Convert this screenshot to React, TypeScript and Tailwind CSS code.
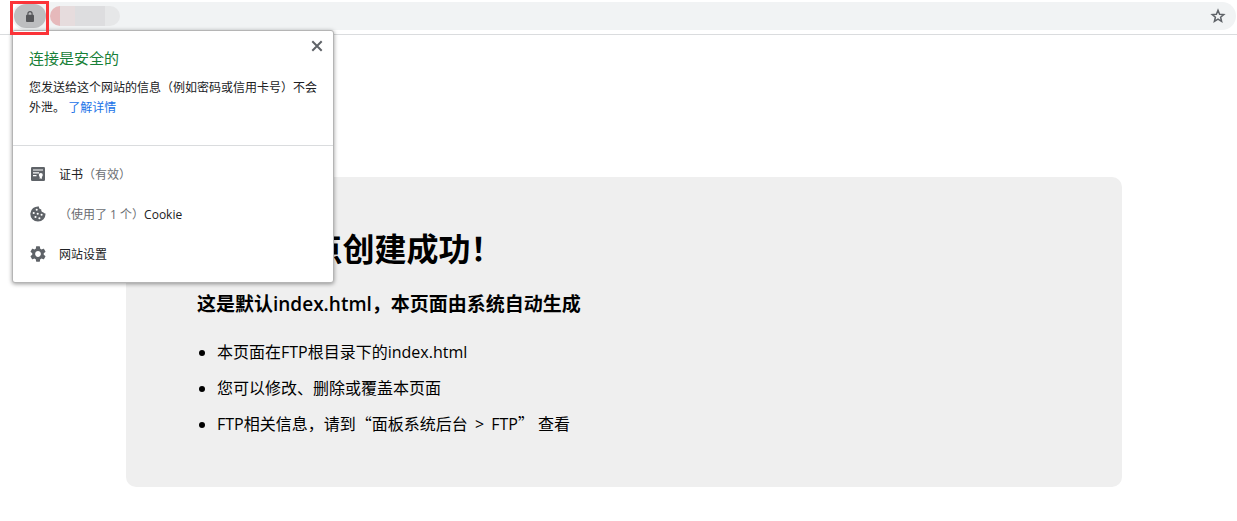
import { MdSettings } from "react-icons/md";

function LockIcon() {
  return (
    <svg viewBox="0 0 8 11" className="h-[11px] w-2" aria-hidden="true">
      <rect x="0" y="3.800" width="8" height="7.200" rx="0.900" fill="#555659" />
      <path d="M1.900 4.500V2.700a2.100 2.100 0 0 1 4.200 0v1.800" fill="none" stroke="#555659" strokeWidth="1.200" />
    </svg>
  );
}

function StarIcon() {
  return (
    <svg viewBox="0 0 16 16" className="size-4" fill="none" stroke="#5f6368" strokeWidth="1.500" aria-hidden="true">
      <path d="m8 2.300 1.600 3.900 4.200.35-3.200 2.750 1 4.100L8 11.200l-3.600 2.200 1-4.100-3.200-2.750 4.200-.35L8 2.300Z" />
    </svg>
  );
}

function CloseIcon() {
  return (
    <svg viewBox="0 0 16 16" className="size-4" fill="none" stroke="#5f6368" strokeWidth="2" aria-hidden="true">
      <path d="m3.300 3.300 9.400 9.400M12.700 3.300l-9.400 9.400" />
    </svg>
  );
}

function CertificateIcon() {
  return (
    <svg viewBox="0 0 16 16" className="size-4 shrink-0" aria-hidden="true">
      <rect x="1" y="1" width="14" height="14" rx="1.300" fill="#5f6368" />
      <path d="M3 4h10M3 6.800h6M3 9.600h3.500" stroke="#fff" strokeWidth="1.200" />
      <circle cx="10.800" cy="9" r="2" fill="#fff" />
      <path d="M9.700 10h2.200v3l-1.100-.7-1.100.7v-3Z" fill="#fff" />
    </svg>
  );
}

function CookieIcon() {
  return (
    <svg viewBox="0 0 16 16" className="size-4 shrink-0" aria-hidden="true">
      <path
        d="M9 .5a2.600 2.600 0 0 0 2.300 3.100 2.500 2.500 0 0 0 2.200 2.900c.6.700 1.300 1 2 .9A7.600 7.600 0 1 1 9 .5Z"
        fill="#5f6368"
      />
      <g fill="#fff">
        <circle cx="6.700" cy="3.800" r="1.050" />
        <circle cx="3.700" cy="7" r="1.050" />
        <circle cx="7.700" cy="7.700" r="1.050" />
        <circle cx="11.600" cy="8.700" r="1.050" />
        <circle cx="5.500" cy="11" r="1.050" />
        <circle cx="9.400" cy="12.200" r="1.050" />
      </g>
    </svg>
  );
}

function AddressBar() {
  return (
    <header className="flex h-[35px] items-start border-b border-[#dadcde] pt-[2px] pr-px pl-3">
      <div className="flex h-7 flex-1 items-center rounded-full bg-[#f1f3f4] pr-[10px] pl-[2px]">
        <button
          type="button"
          aria-label="查看网站信息"
          className="flex h-6 w-8 items-center justify-center rounded-full bg-[#bdbec0]"
        >
          <LockIcon />
        </button>
        <div className="ml-1 flex h-5 overflow-hidden rounded-full" aria-hidden="true">
          <span className="w-[10px] bg-[#e6b9bb]" />
          <span className="w-[15px] bg-[#e6dcdd]" />
          <span className="w-[30px] bg-[#dddddf]" />
          <span className="w-[15px] bg-[#e6e7e8]" />
        </div>
        <button type="button" aria-label="为此标签页添加书签" className="ml-auto">
          <StarIcon />
        </button>
      </div>
    </header>
  );
}

function SiteInfo() {
  return (
    <section
      aria-label="网站信息"
      className="absolute top-[30px] left-3 w-[322px] rounded-[3px] border border-[#b5b5b5] bg-white text-xs text-[#202124] shadow-[0_1px_4px_rgba(0,0,0,0.4)]"
    >
      <button type="button" aria-label="关闭" className="absolute top-[7px] right-2">
        <CloseIcon />
      </button>
      <div className="h-[115px] border-b border-[#dadcde] px-4 pt-[15px]">
        <h2 className="text-[15px] leading-6 text-[#188038]">连接是安全的</h2>
        <p className="mt-2 leading-5">
          您发送给这个网站的信息（例如密码或信用卡号）不会外泄。{" "}
          <a href="#details" className="inline-block text-[#1a73e8]">了解详情</a>
        </p>
      </div>
      <ul className="py-2">
        <li>
          <button type="button" className="flex h-10 w-full items-center gap-[13px] px-[17px]">
            <CertificateIcon />
            <span className="pt-px">
              证书<span className="text-[#6b6e73]">（有效）</span>
            </span>
          </button>
        </li>
        <li>
          <button type="button" className="flex h-10 w-full items-center gap-[13px] px-[17px]">
            <CookieIcon />
            <span className="pt-px">
              <span className="text-[#6b6e73]">（使用了 1 个）</span>Cookie
            </span>
          </button>
        </li>
        <li>
          <button type="button" className="flex h-10 w-full items-center gap-[13px] px-[17px]">
            <MdSettings viewBox="2 2 20 20" className="size-4 shrink-0 text-[#5f6368]" />
            <span className="pt-px">网站设置</span>
          </button>
        </li>
      </ul>
    </section>
  );
}

export default function App() {
  return (
    <div
      lang="zh-CN"
      className="relative min-h-screen bg-white font-['Open_Sans','Noto_Sans_CJK_SC',sans-serif] text-black"
    >
      <AddressBar />
      <main className="mt-[142px] mr-[115px] ml-[126px] rounded-[10px] bg-[#efefef] px-[71px] pt-12 pb-[45px]">
        <h1 className="text-[32px] leading-[48px] font-bold">恭喜, 站点创建成功！</h1>
        <h3 className="mt-4 text-[19px] leading-[30px] font-semibold">这是默认index.html，本页面由系统自动生成</h3>
        <ul className="mt-[15px] list-disc pl-5 text-base leading-9">
          <li>本页面在FTP根目录下的index.html</li>
          <li>您可以修改、删除或覆盖本页面</li>
          <li>
            FTP相关信息，请到<span className="font-['Noto_Sans_CJK_SC',sans-serif] leading-none">“</span>面板系统后台{" "}
            <span className="px-[3px]">&gt;</span> FTP
            <span className="font-['Noto_Sans_CJK_SC',sans-serif] leading-none">”</span> 查看
          </li>
        </ul>
      </main>
      <SiteInfo />
      <div className="pointer-events-none absolute top-px left-[10px] h-[34px] w-[39px] border-[3px] border-[#fb3338]" />
    </div>
  );
}
